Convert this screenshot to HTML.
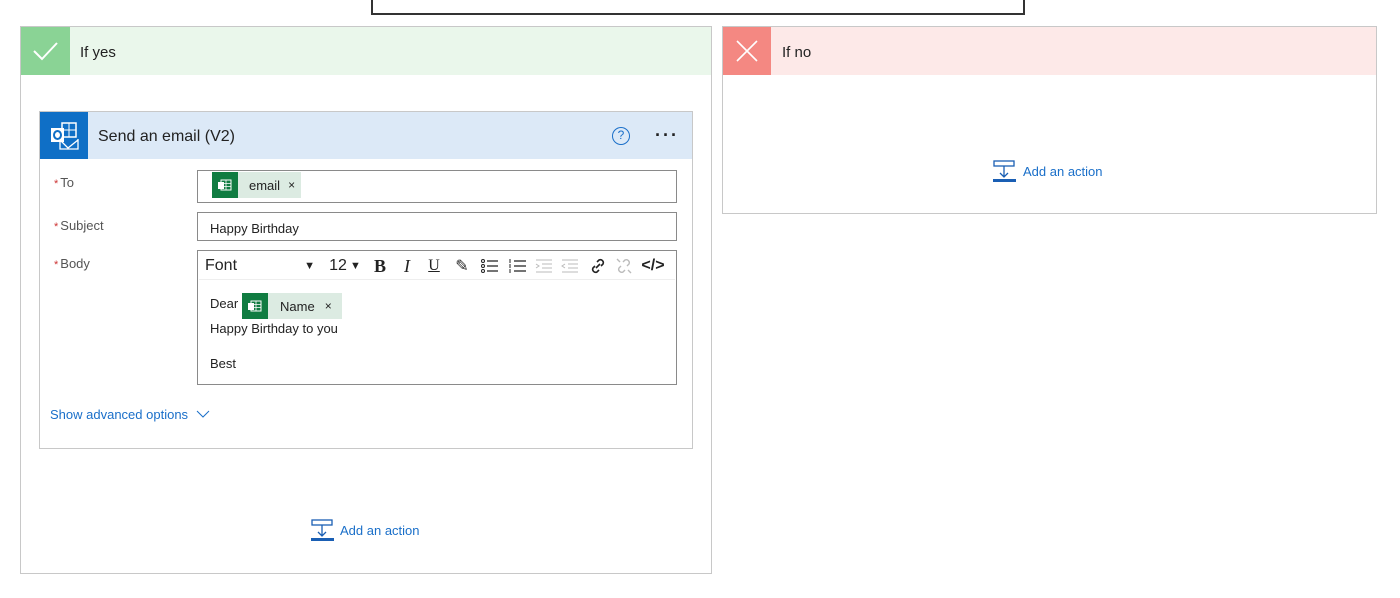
<!DOCTYPE html>
<html><head><style>
*{box-sizing:border-box;margin:0;padding:0}
body{width:1400px;height:598px;background:#fff;font-family:"Liberation Sans",sans-serif;position:relative;overflow:hidden;color:#222}
.abs{position:absolute}
.lbl{font-size:13px;color:#555}
.lbl b{color:#c33;font-weight:normal;font-size:11px;margin-right:2px}
.inp{position:absolute;left:197px;width:480px;border:1px solid #8a8a8a;background:#fff}
.xl{display:inline-block;background:#107c41;width:26px;height:26px;position:relative}
.tok{position:absolute;height:26px;background:#dcebe2;font-size:13px;display:flex;align-items:center}
.add{font-size:13px;color:#1a6fc9}
.tb{position:absolute;top:0;height:28px;font-size:16px;display:flex;align-items:center;justify-content:center;color:#222}
</style></head><body>
<div class="abs" style="left:371px;top:-2px;width:654px;height:17px;border:2px solid #333;border-top:none"></div>

<div class="abs" style="left:20px;top:26px;width:692px;height:548px;border:1px solid #c8c8c8"></div>
<div class="abs" style="left:21px;top:27px;width:690px;height:48px;background:#eaf7eb"></div>
<div class="abs" style="left:21px;top:27px;width:49px;height:48px;background:#8ad395">
<svg width="49" height="48"><path d="M13 24 L21 32 L36 16" stroke="#fff" stroke-width="2" fill="none"/></svg></div>
<div class="abs" style="left:80px;top:44px;font-size:15px">If yes</div>

<div class="abs" style="left:722px;top:26px;width:655px;height:188px;border:1px solid #c8c8c8"></div>
<div class="abs" style="left:723px;top:27px;width:653px;height:48px;background:#fde9e8"></div>
<div class="abs" style="left:723px;top:27px;width:48px;height:48px;background:#f48882">
<svg width="48" height="48"><path d="M14 14 L34 34 M34 14 L14 34" stroke="#fff" stroke-width="1.6"/></svg></div>
<div class="abs" style="left:782px;top:44px;font-size:15px">If no</div>

<div class="abs" style="left:39px;top:111px;width:654px;height:338px;border:1px solid #c8c8c8"></div>
<div class="abs" style="left:40px;top:112px;width:652px;height:47px;background:#dce9f7"></div>
<div class="abs" style="left:40px;top:112px;width:48px;height:47px;background:#0f6fc6">
<svg width="48" height="47"><rect x="22" y="11" width="14" height="14" fill="none" stroke="#fff" stroke-width="1.5"/><path d="M22 18h14M29 11v14" stroke="#fff"/><path d="M20 28 L28 36 L38 28 M20 27v10h18V27" stroke="#fff" fill="none" stroke-width="1.3"/><rect x="11" y="16" width="13" height="14" fill="#fff"/><ellipse cx="17.5" cy="23" rx="3.5" ry="4" fill="none" stroke="#0f6fc6" stroke-width="2"/></svg></div>
<div class="abs" style="left:98px;top:128px;font-size:16px">Send an email (V2)</div>
<div class="abs" style="left:612px;top:127px;width:18px;height:18px;border:1.5px solid #1a6fc9;border-radius:50%;color:#1a6fc9;font-size:12px;text-align:center;line-height:15px">?</div>
<div class="abs" style="left:655px;top:125px;font-size:18px;letter-spacing:2px;font-weight:bold">···</div>

<div class="abs lbl" style="left:54px;top:175px"><b>*</b>To</div>
<div class="abs lbl" style="left:54px;top:218px"><b>*</b>Subject</div>
<div class="abs lbl" style="left:54px;top:256px"><b>*</b>Body</div>

<div class="inp" style="top:170px;height:33px"></div>
<div class="tok" style="left:212px;top:172px;width:89px"><span class="xl"><svg width="26" height="26"><rect x="9" y="8" width="10" height="10" fill="none" stroke="#fff"/><path d="M14 8v10M9 11.5h10M9 14.5h10" stroke="#fff" stroke-width=".8"/><rect x="6" y="10" width="6" height="7" fill="#fff"/></svg></span><span style="margin-left:11px">email</span><span style="margin-left:8px;font-size:12px">×</span></div>

<div class="inp" style="top:212px;height:29px;font-size:13px;padding:8px 12px">Happy Birthday</div>

<div class="inp" style="top:250px;height:135px"></div>
<div class="abs" style="left:199px;top:252px;width:476px;height:28px;border-bottom:1px solid #eee">
<div class="tb" style="left:6px;font-size:16px;justify-content:flex-start;width:110px">Font<span style="margin-left:auto;font-size:11px">▼</span></div>
<div class="tb" style="left:128px;width:36px">12<span style="font-size:11px;margin-left:3px">▼</span></div>
<div class="tb" style="left:170px;width:22px;font-weight:bold;font-family:'Liberation Serif';font-size:18px">B</div>
<div class="tb" style="left:198px;width:20px;font-style:italic;font-family:'Liberation Serif';font-size:18px">I</div>
<div class="tb" style="left:224px;width:22px;text-decoration:underline;font-family:'Liberation Serif'">U</div>
<div class="tb" style="left:252px;width:22px">✎</div>
<div class="tb" style="left:280px;width:22px"><svg width="18" height="16"><circle cx="2" cy="3" r="1.5" fill="none" stroke="#222"/><circle cx="2" cy="8" r="1.5" fill="none" stroke="#222"/><circle cx="2" cy="13" r="1.5" fill="none" stroke="#222"/><path d="M6 3h11M6 8h11M6 13h11" stroke="#222" stroke-width="1.3"/></svg></div>
<div class="tb" style="left:308px;width:22px"><svg width="18" height="16"><path d="M1 1v4M1 6v4M1 11v4" stroke="#222"/><path d="M5 3h12M5 8h12M5 13h12" stroke="#222" stroke-width="1.3"/></svg></div>
<div class="tb" style="left:334px;width:22px"><svg width="18" height="16"><path d="M1 2h16M7 6h10M7 10h10M1 14h16M1 6l3 2-3 2" stroke="#bbb" fill="none"/></svg></div>
<div class="tb" style="left:360px;width:22px"><svg width="18" height="16"><path d="M1 2h16M7 6h10M7 10h10M1 14h16M4 6l-3 2 3 2" stroke="#bbb" fill="none"/></svg></div>
<div class="tb" style="left:388px;width:22px"><svg width="18" height="18"><path d="M7 11l4-4M8 5l2-2a3 3 0 014 4l-2 2M10 13l-2 2a3 3 0 01-4-4l2-2" stroke="#222" stroke-width="1.6" fill="none"/></svg></div>
<div class="tb" style="left:414px;width:22px"><svg width="18" height="18"><path d="M8 5l2-2a3 3 0 014 4l-2 2M10 13l-2 2a3 3 0 01-4-4l2-2M2 2l3 3M13 13l3 3" stroke="#bbb" stroke-width="1.4" fill="none"/></svg></div>
<div class="tb" style="left:440px;width:28px;font-weight:bold">&lt;/&gt;</div>
</div>
<div class="abs" style="left:210px;top:296px;font-size:13px">Dear</div>
<div class="tok" style="left:242px;top:293px;width:100px"><span class="xl"><svg width="26" height="26"><rect x="9" y="8" width="10" height="10" fill="none" stroke="#fff"/><path d="M14 8v10M9 11.5h10M9 14.5h10" stroke="#fff" stroke-width=".8"/><rect x="6" y="10" width="6" height="7" fill="#fff"/></svg></span><span style="margin-left:12px">Name</span><span style="margin-left:10px;font-size:12px">×</span></div>
<div class="abs" style="left:210px;top:321px;font-size:13px">Happy Birthday to you</div>
<div class="abs" style="left:210px;top:356px;font-size:13px">Best</div>

<div class="abs add" style="left:50px;top:407px">Show advanced options</div>
<svg class="abs" style="left:196px;top:409px" width="14" height="10"><path d="M1 2l6 6 6-6" stroke="#1a6fc9" fill="none"/></svg>

<div class="abs" style="left:311px;top:519px"><svg width="23" height="23"><rect x="1" y="1" width="20" height="5" fill="none" stroke="#1a5fb4" stroke-width="1.3"/><path d="M11 6v11M7 13l4 4 4-4" stroke="#1a5fb4" fill="none" stroke-width="1.3"/><rect x="0" y="19" width="23" height="3" fill="#1a5fb4"/></svg></div>
<div class="abs add" style="left:340px;top:523px">Add an action</div>
<div class="abs" style="left:993px;top:160px"><svg width="23" height="23"><rect x="1" y="1" width="20" height="5" fill="none" stroke="#1a5fb4" stroke-width="1.3"/><path d="M11 6v11M7 13l4 4 4-4" stroke="#1a5fb4" fill="none" stroke-width="1.3"/><rect x="0" y="19" width="23" height="3" fill="#1a5fb4"/></svg></div>
<div class="abs add" style="left:1023px;top:164px">Add an action</div>
</body></html>
